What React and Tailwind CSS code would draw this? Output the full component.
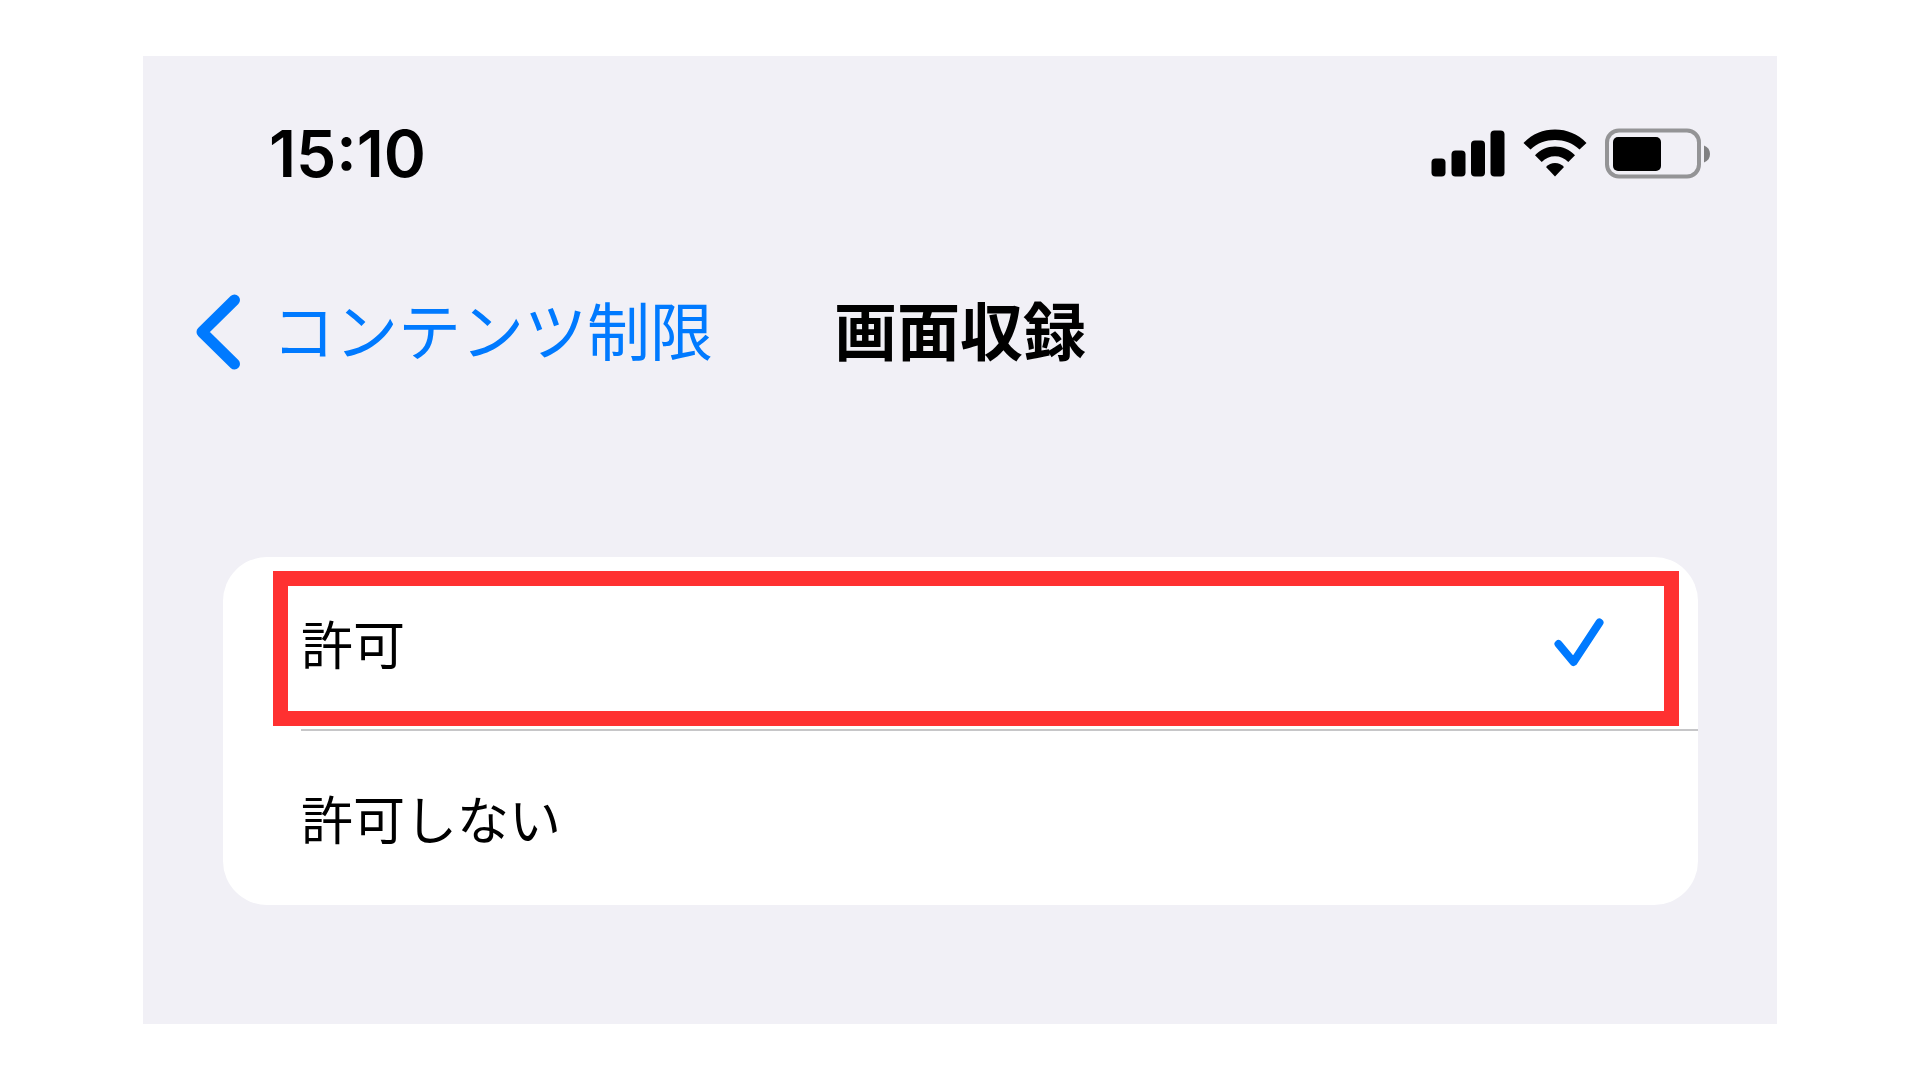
import React, { useState } from 'react';

const OPTIONS = [
  { value: 'allow', label: '許可', highlighted: true },
  { value: 'deny', label: '許可しない', highlighted: false },
];

const SignalIcon = () => (
  <svg width="74" height="48" viewBox="0 0 74 48" aria-hidden="true">
    <rect x="0.500" y="28.500" width="14" height="18" rx="4" />
    <rect x="20.500" y="20.500" width="14" height="26" rx="4" />
    <rect x="40" y="10.500" width="14" height="36" rx="4" />
    <rect x="59.500" y="0.500" width="14" height="46" rx="4" />
  </svg>
);

const WifiIcon = () => (
  <svg width="64" height="50" viewBox="0 0 64 50" aria-hidden="true">
    <path d="M32 .5C44 .5 55 5 63.500 14L56.500 20.500C49.500 13.800 41 11 32 11S14.500 13.800 7.500 20.500L.5 14C9 5 20 .5 32 .5Z" />
    <path d="M32 17.500C40 17.500 46.500 20.500 52 26.300L45.300 33C41.500 29.200 37 27.300 32 27.300S22.500 29.200 18.700 33L12 26.300C17.500 20.500 24 17.500 32 17.500Z" />
    <path d="M32 34C35.500 34 38.500 35.500 41 38L32 47.500L23 38C25.500 35.500 28.500 34 32 34Z" />
  </svg>
);

const BatteryIcon = () => (
  <svg width="106" height="52" viewBox="0 0 106 52" aria-hidden="true">
    <rect x="2" y="2.500" width="92" height="46" rx="12" fill="none" stroke="#949496" strokeWidth="4" />
    <rect x="8" y="9" width="48" height="34" rx="5" />
    <path d="M99 17.500C103 19 105 22 105 26S103 33 99 34.500Z" fill="#808082" />
  </svg>
);

const StatusBar = () => (
  <div className="flex h-[72px] items-center justify-between pl-[126px] pr-[66px]">
    <time className="font-['Inter'] text-[64px] font-semibold leading-[72px]">15:10</time>
    <div className="flex items-center gap-[18px]">
      <SignalIcon />
      <WifiIcon />
      <BatteryIcon />
    </div>
  </div>
);

const NavBar = () => (
  <header className="mt-[100px] grid h-[84px] grid-cols-[1fr_auto_1fr] items-start px-[52px]">
    <button type="button" className="flex items-start gap-[31px] justify-self-start whitespace-nowrap text-[#007aff]">
      <svg width="46" height="84" viewBox="0 0 46 84" fill="none" stroke="currentColor" strokeWidth="11" strokeLinecap="round" strokeLinejoin="round" aria-hidden="true">
        <path d="M39.500 10L7 42L39.500 74" />
      </svg>
      <span className="text-[63px] leading-[76px]">コンテンツ制限</span>
    </button>
    <h1 className="text-[63px] font-bold leading-[76px]">画面収録</h1>
  </header>
);

const OptionRow = ({ option, checked, onSelect }) => (
  <label className="relative flex cursor-pointer pl-[78px]">
    <input
      type="radio"
      name="screen-recording"
      value={option.value}
      checked={checked}
      onChange={() => onSelect(option.value)}
      className="sr-only"
    />
    <span className={`flex h-[174px] flex-1 items-center justify-between pr-[94px] ${option.highlighted ? 'border-b-2 border-[#c6c6c8]' : ''}`}>
      <span className="text-[52px] leading-[72px]">{option.label}</span>
      {checked && (
        <svg width="50" height="50" viewBox="0 0 50 50" fill="none" stroke="#007aff" strokeWidth="8" strokeLinecap="round" strokeLinejoin="round" aria-hidden="true">
          <path d="M4.500 26L19.500 44L45.500 4.500" />
        </svg>
      )}
    </span>
    {option.highlighted && (
      <span className="pointer-events-none absolute bottom-[5px] left-[50px] right-[19px] top-[14px] border-[15px] border-[#ff3131]" />
    )}
  </label>
);

export default function App() {
  const [selected, setSelected] = useState('allow');

  return (
    <div className="min-h-screen bg-white py-14">
      <main className="mx-[143px] bg-[#f1f0f6] pb-[119px] pt-[62px] font-['Noto_Sans_CJK_JP',sans-serif] text-black" lang="ja">
        <StatusBar />
        <NavBar />
        <div role="radiogroup" aria-label="画面収録" className="ml-20 mr-[79px] mt-[183px] overflow-hidden rounded-[44px] bg-white">
          {OPTIONS.map((option) => (
            <OptionRow
              key={option.value}
              option={option}
              checked={selected === option.value}
              onSelect={setSelected}
            />
          ))}
        </div>
      </main>
    </div>
  );
}
